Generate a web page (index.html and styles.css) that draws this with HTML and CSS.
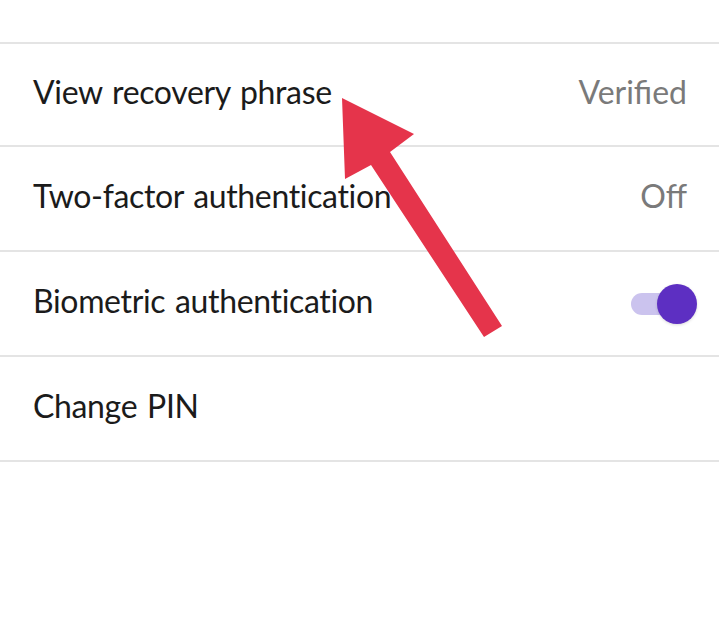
FILE: index.html
```html
<!DOCTYPE html>
<html>
<head>
<meta charset="utf-8">
<link rel="stylesheet" href="styles.css">
</head>
<body>
<div class="page">
  <div class="list">
    <div class="row first"><span class="label">View recovery phrase</span><span class="value">Verified</span></div>
    <div class="row"><span class="label">Two-factor authentication</span><span class="value">Off</span></div>
    <div class="row"><span class="label">Biometric authentication</span><span class="toggle"><span class="track"></span><span class="knob"></span></span></div>
    <div class="row"><span class="label">Change PIN</span></div>
  </div>
  <svg class="arrow" width="719" height="634" viewBox="0 0 719 634">
    <polygon points="342,98 414,134 390,152 502,326 484,337 371,165 345,179" fill="#e5344b"/>
  </svg>
</div>
</body>
</html>
```
FILE: styles.css
```css
html, body {
  margin: 0;
  padding: 0;
  background: #ffffff;
}
.page {
  position: relative;
  width: 719px;
  height: 634px;
  overflow: hidden;
  font-family: "Lato", "Open Sans", sans-serif;
}
.list {
  padding-top: 42px;
}
.row {
  display: flex;
  align-items: center;
  justify-content: space-between;
  height: 103px;
  border-top: 2px solid #e4e4e4;
  padding: 0 32px 0 33px;
}
.row.first {
  height: 101px;
}
.row:last-child {
  border-bottom: 2px solid #e4e4e4;
}
.label {
  font-size: 32px;
  line-height: 38px;
  letter-spacing: -0.35px;
  word-spacing: 2px;
  color: #1b1b1b;
  margin-top: -5px;
}
.value {
  font-size: 32px;
  line-height: 38px;
  color: #7a7a7a;
  margin-top: -5px;
}
.toggle {
  position: relative;
  width: 66px;
  height: 42px;
  margin-right: -10px;
}
.track {
  position: absolute;
  left: 0;
  top: 10px;
  width: 50px;
  height: 22px;
  border-radius: 11px;
  background: #cbc3ee;
}
.knob {
  position: absolute;
  right: 0;
  top: 1px;
  width: 40px;
  height: 40px;
  border-radius: 50%;
  background: #5d2fc2;
  box-shadow: 0 1px 3px rgba(0,0,0,0.15);
}
.arrow {
  position: absolute;
  left: 0;
  top: 0;
}
```
